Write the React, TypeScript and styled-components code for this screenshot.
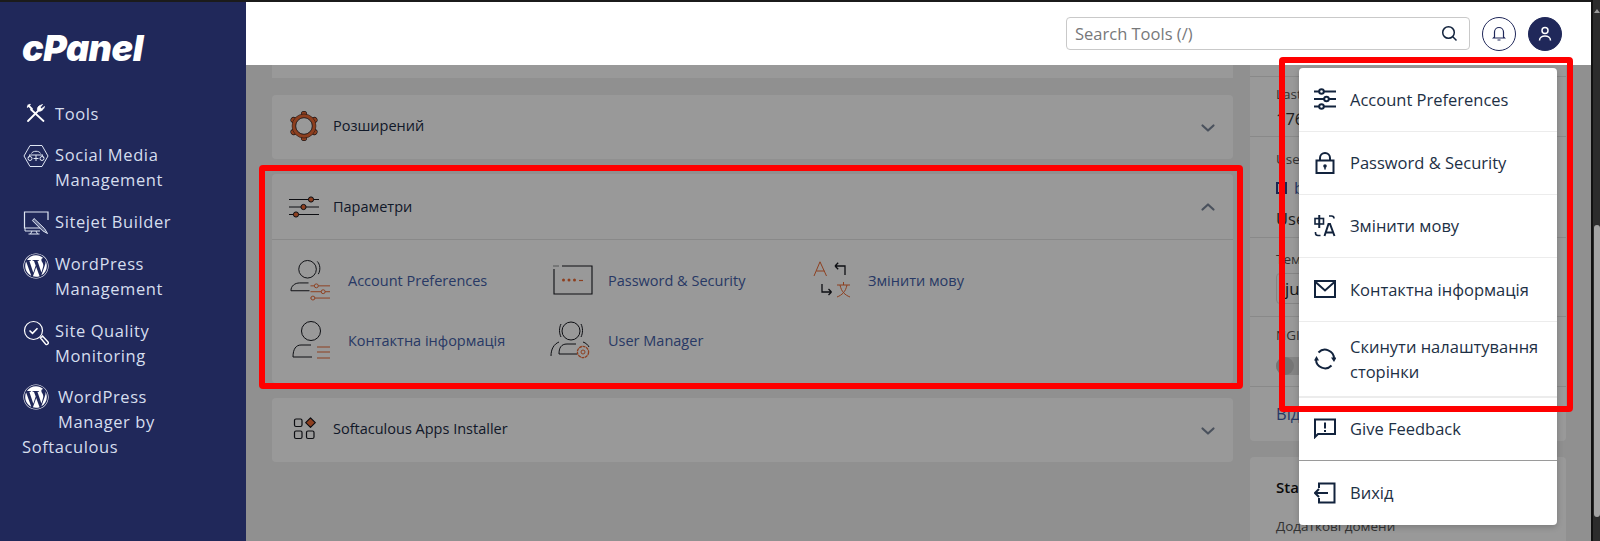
import React from 'react';
import styled, { createGlobalStyle } from 'styled-components';
import { FaWordpress } from 'react-icons/fa';

const GlobalStyle = createGlobalStyle`
  html, body {
    margin: 0;
    padding: 0;
    height: 541px;
    overflow: hidden;
    background: #2c2c2c;
    font-family: "Open Sans", "Noto Sans", sans-serif;
  }
  * { box-sizing: border-box; }
`;

const ORANGE = '#ec6a35';
const INK = '#16181f';

const ChevronIcon = ({ up }: { up?: boolean }) => (
  <ChevronWrap $up={up}>
    <svg width="18" height="18" viewBox="0 0 18 18" fill="none" stroke="#7c889b" strokeWidth="2.2" strokeLinecap="round" strokeLinejoin="round">
      <path d={up ? 'M3.5 11.5 9 6.5l5.500 5' : 'M3.5 6.5 9 11.5l5.500-5'} />
    </svg>
  </ChevronWrap>
);

const GearIcon = () => (
  <svg width="30" height="30" viewBox="0 0 30 30">
    <g stroke={INK} strokeWidth="6.200" strokeLinecap="round">
      <path d="M15 3v24M4.600 9l20.800 12M4.600 21l20.800-12" />
    </g>
    <g stroke={ORANGE} strokeWidth="5" strokeLinecap="round">
      <path d="M15 3v24M4.600 9l20.800 12M4.600 21l20.800-12" />
    </g>
    <circle cx="15" cy="15" r="12" fill={ORANGE} stroke={INK} strokeWidth="0.500" />
    <circle cx="15" cy="15" r="8.300" fill="#fff" stroke={INK} strokeWidth="0.800" />
  </svg>
);

const SlidersBigIcon = () => (
  <svg width="30" height="22" viewBox="0 0 30 22" fill="none" stroke={INK} strokeWidth="1">
    <path d="M0 3.500h30M0 11h30M0 18.500h30" />
    <circle cx="22" cy="3.500" r="2.600" fill={ORANGE} />
    <circle cx="14.500" cy="11" r="2.600" fill={ORANGE} />
    <circle cx="7" cy="18.500" r="2.600" fill={ORANGE} />
  </svg>
);

const AppsIcon = () => (
  <svg width="24" height="24" viewBox="0 0 24 24" fill="none" stroke={INK} strokeWidth="1.200">
    <rect x="1.500" y="2" width="7.500" height="7.500" rx="1.500" />
    <rect x="1.500" y="14" width="7.500" height="7.500" rx="1.500" />
    <rect x="13.500" y="14" width="7.500" height="7.500" rx="1.500" />
    <path d="M17.500.8l4.800 4.800-4.800 4.800-4.800-4.800z" fill={ORANGE} strokeLinejoin="round" />
  </svg>
);

const AccountPrefsIcon = () => (
  <svg width="42" height="42" viewBox="0 0 42 42" fill="none" strokeWidth="1">
    <g stroke={INK}>
      <circle cx="19" cy="10" r="9" />
      <path d="M29 2c3 3 3.500 9 1 13M20 24H11c-5 0-9 3-9 8h19" />
    </g>
    <g stroke={ORANGE}>
      <path d="M22 27h20M22 33h20M22 39.500h20" />
      <circle cx="28" cy="27" r="2" fill="#fff" />
      <circle cx="35" cy="33" r="2" fill="#fff" />
      <circle cx="24.500" cy="39.500" r="2" fill="#fff" />
    </g>
  </svg>
);

const PasswordIcon = () => (
  <svg width="40" height="30" viewBox="0 0 40 30" fill="none">
    <path d="M9 1h30v28H1V4" stroke={INK} strokeWidth="1.100" />
    <path d="M0.500 1h6" stroke={INK} strokeWidth="1" strokeDasharray="1 1" />
    <g fill={ORANGE}>
      <circle cx="10.500" cy="15" r="1.500" />
      <circle cx="16" cy="15" r="1.500" />
      <circle cx="21.500" cy="15" r="1.500" />
    </g>
    <path d="M26 15.500h4" stroke={ORANGE} strokeWidth="1.200" />
  </svg>
);

const LanguageIcon = () => (
  <svg width="38" height="38" viewBox="0 0 38 38" fill="none" strokeWidth="1">
    <path d="M1 15 7 0.800 13.500 15M3.400 10h8" stroke={ORANGE} />
    <path d="M22 5l3.200-3.200M22 5l3.200 3.200M22 5h10v9" stroke={INK} strokeWidth="1.300" />
    <path d="M9 23v8h9.500M18.500 31l-3-3M18.500 31l-3 3" stroke={INK} strokeWidth="1.300" />
    <path d="M24 24h13M30.500 21v3M27 24c1.500 7 5 10 10 12M34 24c-1.500 7-5 10-10 12" stroke={ORANGE} />
  </svg>
);

const ContactIcon = () => (
  <svg width="38" height="38" viewBox="0 0 38 38" fill="none" strokeWidth="1">
    <g stroke={INK}>
      <circle cx="19" cy="10" r="9.500" />
      <path d="M19 24H9c-5 0-8 4-8 12h19" />
    </g>
    <path d="M25 26h13M25 31h13M25 37h13" stroke={ORANGE} />
  </svg>
);

const UserManagerIcon = () => (
  <svg width="42" height="38" viewBox="0 0 42 38" fill="none" strokeWidth="1">
    <g stroke={INK}>
      <circle cx="21" cy="10" r="9" />
      <path d="M11 3c-2 4-2 9 0 13M31 3c2 4 2 9 0 13M9 21c-5 2-8 7-8 14M33 21c3 1 5 3 6 5M27 33H9c0-6 2-10 8-10h9" />
    </g>
    <circle cx="33" cy="31" r="5.600" stroke={ORANGE} strokeDasharray="3 0.600" strokeWidth="1.300" />
    <circle cx="33" cy="31" r="2" stroke={ORANGE} />
  </svg>
);

const NavToolsIcon = () => (
  <svg width="20" height="20" viewBox="0 0 20 20" fill="none" stroke="#fff" strokeWidth="1.800" strokeLinecap="round">
    <path d="M2 18 11.500 8.500" />
    <path d="M11.800 8.200c-1-2.200-.2-4 1.200-5.200l3.500-1.500-2.300 2.800 1.400 1.400 2.900-2.200c-.6 2.800-3.200 5.400-6.700 4.700z" fill="#fff" strokeWidth="0.800" strokeLinejoin="round" />
    <path d="M2.300 2.300 6 6M5 6.500 17.500 18" />
    <path d="M1.500 4 4 1.500" strokeWidth="1.400" />
  </svg>
);

const NavSocialIcon = () => (
  <svg width="26" height="24" viewBox="0 0 26 24" fill="none" stroke="#dfe6f3" strokeWidth="1">
    <path d="M7 1.500h12L25 12l-6 10.500H7L1 12z" />
    <path d="M8.500 9.500c1-3 8-3 9 0M6 11h14M7 11l-2 3M19 11l2 3" />
    <circle cx="7" cy="14.500" r="2" />
    <circle cx="19" cy="14.500" r="2" />
    <path d="M13 11v6M10.500 14.500h5" />
  </svg>
);

const NavSitejetIcon = () => (
  <svg width="26" height="24" viewBox="0 0 26 24" fill="none" stroke="#dfe6f3" strokeWidth="1">
    <path d="M17 17H1.500V1h23.500v8" strokeWidth="1.200" />
    <path d="M2 17v3h15M9 20l-1.500 3M13 20l1.500 3M5.500 23h11" />
    <path d="M11 7.500l10.500 10 3 5-5-2.800-10-10z" fill="#dfe6f3" fillOpacity="0.35" />
  </svg>
);

const NavQualityIcon = () => (
  <svg width="26" height="26" viewBox="0 0 26 26" fill="none" stroke="#fff">
    <circle cx="10.500" cy="10.500" r="9" strokeWidth="1.200" />
    <path d="M6.500 10.500l3 2.800 5-5" strokeWidth="1.600" />
    <path d="M17.500 18l2-2 5.500 6c1 1.500-1 3.300-2.300 2.300z" strokeWidth="1.400" />
  </svg>
);

const menuStroke = { fill: 'none', stroke: '#12233d', strokeWidth: 2 };

const MenuSlidersIcon = () => (
  <svg width="22" height="22" viewBox="0 0 22 22" {...menuStroke}>
    <path d="M0 3.500h5M10 3.500h12M0 11h10M15 11h7M0 18.500h5M10 18.500h12" />
    <circle cx="7.500" cy="3.500" r="2.300" />
    <circle cx="12.500" cy="11" r="2.300" />
    <circle cx="7.500" cy="18.500" r="2.300" />
  </svg>
);

const MenuLockIcon = () => (
  <svg width="22" height="22" viewBox="0 0 22 22" {...menuStroke}>
    <rect x="2.500" y="8.500" width="17" height="12.500" />
    <path d="M6 8.500V6a5 5 0 0 1 10 0v2.500" />
    <circle cx="11" cy="14" r="1.800" fill="#12233d" stroke="none" />
    <path d="M11 14v3.500" strokeWidth="1.500" />
  </svg>
);

const MenuTranslateIcon = () => (
  <svg width="22" height="22" viewBox="0 0 22 22" {...menuStroke}>
    <rect x="1" y="3.500" width="8.500" height="5.500" strokeWidth="1.600" />
    <path d="M5.250 0v13" />
    <path d="M15 1h2.500c1.500 0 2.500 1 2.500 2.500M6.500 20.500H4C2.500 20.500 1.500 19.500 1.500 18v-1" strokeWidth="1.600" />
    <path d="M10.500 21l4-12h1.500l4.500 12M12 17.500h7" strokeWidth="2" />
  </svg>
);

const MenuMailIcon = () => (
  <svg width="22" height="18" viewBox="0 0 22 18" {...menuStroke}>
    <rect x="1" y="1" width="20" height="16" />
    <path d="M1.500 2 11 10.500 20.500 2" />
  </svg>
);

const MenuResetIcon = () => (
  <svg width="22" height="22" viewBox="0 0 22 22" {...menuStroke}>
    <path d="M4.500 4.500A9 9 0 0 1 20 10.500M17.500 17.500A9 9 0 0 1 2 11.500" />
    <path d="M17 9.500h5.500L20 14zM0 12.500h5L2.500 8z" fill="#12233d" stroke="none" />
  </svg>
);

const MenuFeedbackIcon = () => (
  <svg width="22" height="21" viewBox="0 0 22 21" {...menuStroke}>
    <path d="M1 19V1.500h20V16H4z" />
    <path d="M11 4.500v6M11 12v2" />
  </svg>
);

const MenuExitIcon = () => (
  <svg width="22" height="22" viewBox="0 0 22 22" {...menuStroke}>
    <path d="M5 6V1.500h15.500v19H5V16" />
    <path d="M14 11H1M5 7l-4 4 4 4" />
  </svg>
);

const App = () => {
  return (
    <Page>
      <GlobalStyle />
      <Shell>
        <TopBand />
        <Body>
          <Sidebar>
            <Logo>cPanel</Logo>
            <Nav>
              <NavItem>
                <NavIcon><NavToolsIcon /></NavIcon>
                Tools
              </NavItem>
              <NavItem>
                <NavIcon><NavSocialIcon /></NavIcon>
                <span>Social Media<br />Management</span>
              </NavItem>
              <NavItem>
                <NavIcon><NavSitejetIcon /></NavIcon>
                Sitejet Builder
              </NavItem>
              <NavItem>
                <NavIcon><FaWordpress size={26} color="#fff" /></NavIcon>
                <span>WordPress<br />Management</span>
              </NavItem>
              <NavItem>
                <NavIcon><NavQualityIcon /></NavIcon>
                <span>Site Quality<br />Monitoring</span>
              </NavItem>
              <WrappedNavItem>
                <FloatIcon><FaWordpress size={26} color="#fff" /></FloatIcon>
                WordPress Manager by Softaculous
              </WrappedNavItem>
            </Nav>
          </Sidebar>
          <Main>
            <Header>
              <SearchBox>
                <SearchInput placeholder="Search Tools (/)" />
                <svg width="17" height="17" viewBox="0 0 17 17" fill="none" stroke="#12233d" strokeWidth="1.500">
                  <circle cx="7.500" cy="7.500" r="5.800" />
                  <path d="M11.800 11.800 15.500 15.500" />
                </svg>
              </SearchBox>
              <BellButton>
                <svg width="14" height="15" viewBox="0 0 14 15" fill="none" stroke="#20285a" strokeWidth="1.200">
                  <path d="M2.500 11V6a4.500 4.500 0 0 1 9 0v5l1 1H1.500zM5.500 14h3" />
                </svg>
              </BellButton>
              <AvatarButton>
                <svg width="14" height="16" viewBox="0 0 14 16" fill="none" stroke="#fff" strokeWidth="1.500">
                  <circle cx="7" cy="4.500" r="3" />
                  <path d="M1.500 14.500c0-6 11-6 11 0" />
                </svg>
              </AvatarButton>
            </Header>
            <Content>
              <LeftColumn>
                <StubCard />
                <Card>
                  <CardHeader>
                    <CardIcon><GearIcon /></CardIcon>
                    <CardTitle>Розширений</CardTitle>
                    <ChevronIcon />
                  </CardHeader>
                </Card>
                <Card>
                  <CardHeader $open>
                    <CardIcon><SlidersBigIcon /></CardIcon>
                    <CardTitle>Параметри</CardTitle>
                    <ChevronIcon up />
                  </CardHeader>
                  <ToolGrid>
                    <ToolLink>
                      <ToolIcon><AccountPrefsIcon /></ToolIcon>
                      Account Preferences
                    </ToolLink>
                    <ToolLink>
                      <ToolIcon $gap={15}><PasswordIcon /></ToolIcon>
                      Password &amp; Security
                    </ToolLink>
                    <ToolLink>
                      <ToolIcon $gap={17}><LanguageIcon /></ToolIcon>
                      Змінити мову
                    </ToolLink>
                    <ToolLink>
                      <ToolIcon><ContactIcon /></ToolIcon>
                      Контактна інформація
                    </ToolLink>
                    <ToolLink>
                      <ToolIcon $gap={16}><UserManagerIcon /></ToolIcon>
                      User Manager
                    </ToolLink>
                  </ToolGrid>
                </Card>
                <Card>
                  <CardHeader>
                    <CardIcon $inset={4}><AppsIcon /></CardIcon>
                    <CardTitle>Softaculous Apps Installer</CardTitle>
                    <ChevronIcon />
                  </CardHeader>
                </Card>
              </LeftColumn>
              <RightColumn>
                <InfoCard>
                  <InfoRow $height={12} $top={0} />
                  <InfoRow $height={60} $top={8} $gap={4}>
                    <InfoLabel>Last Login IP</InfoLabel>
                    <InfoValue>176</InfoValue>
                  </InfoRow>
                  <InfoRow $height={101} $top={13}>
                    <InfoLabel>User</InfoLabel>
                    <InfoLink>
                      <svg width="11" height="12" viewBox="0 0 11 12" fill="none" stroke="#2e4288" strokeWidth="2">
                        <rect x="1" y="1" width="9" height="10" />
                      </svg>
                      b
                    </InfoLink>
                    <InfoValue>Use</InfoValue>
                  </InfoRow>
                  <InfoRow $height={79} $top={12} $gap={5}>
                    <InfoLabel>Тема</InfoLabel>
                    <ThemeSelect>jupiter</ThemeSelect>
                  </InfoRow>
                  <InfoRow $height={70} $top={9}>
                    <InfoLabel>NGINX</InfoLabel>
                    <Toggle />
                  </InfoRow>
                  <InfoRow $height={54} $top={15}>
                    <InfoLink>Відомості</InfoLink>
                  </InfoRow>
                </InfoCard>
                <StatsCard>
                  <StatsTitle>Statistics</StatsTitle>
                  <InfoLabel>Додаткові домени</InfoLabel>
                </StatsCard>
              </RightColumn>
              <Backdrop />
            </Content>
          </Main>
        </Body>
      </Shell>
      <Scrollbar>
        <ScrollArrow />
        <ScrollThumb />
      </Scrollbar>
      <UserMenu>
        <MenuItem $height={64}>
          <MenuIcon><MenuSlidersIcon /></MenuIcon>
          Account Preferences
        </MenuItem>
        <MenuItem $height={63}>
          <MenuIcon><MenuLockIcon /></MenuIcon>
          Password &amp; Security
        </MenuItem>
        <MenuItem $height={63}>
          <MenuIcon><MenuTranslateIcon /></MenuIcon>
          Змінити мову
        </MenuItem>
        <MenuItem $height={64}>
          <MenuIcon><MenuMailIcon /></MenuIcon>
          Контактна інформація
        </MenuItem>
        <MenuItem $height={76} $rule="2px solid #ececec">
          <MenuIcon><MenuResetIcon /></MenuIcon>
          Скинути налаштування сторінки
        </MenuItem>
        <MenuItem $height={63} $rule="1px solid #9a9a9a">
          <MenuIcon><MenuFeedbackIcon /></MenuIcon>
          Give Feedback
        </MenuItem>
        <MenuItem $height={64} $rule="0">
          <MenuIcon><MenuExitIcon /></MenuIcon>
          Вихід
        </MenuItem>
      </UserMenu>
      <LeftHighlight />
      <RightHighlight />
    </Page>
  );
};

export default App;

const Page = styled.div`
  position: relative;
  display: flex;
  width: 1600px;
  height: 541px;
  overflow: hidden;
`;

const Shell = styled.div`
  flex: 1;
  min-width: 0;
  display: flex;
  flex-direction: column;
`;

const TopBand = styled.div`
  height: 2px;
  background: #1b1b1b;
`;

const Body = styled.div`
  flex: 1;
  min-height: 0;
  display: flex;
`;

const Sidebar = styled.aside`
  width: 246px;
  flex-shrink: 0;
  background: #20285a;
  padding: 0 22px;
`;

const Logo = styled.div`
  height: 98.500px;
  padding-top: 25px;
  color: #fff;
  font-family: Inter, "Open Sans", sans-serif;
  font-style: italic;
  font-weight: 900;
  font-size: 36px;
  line-height: 42px;
  letter-spacing: -0.5px;
`;

const Nav = styled.nav`
  display: flex;
  flex-direction: column;
  gap: 16.500px;
  color: #d6deee;
  font-size: 16.500px;
  line-height: 25px;
  letter-spacing: 0.6px;
`;

const NavItem = styled.a`
  display: flex;
  align-items: flex-start;
`;

const NavIcon = styled.span`
  width: 33px;
  flex-shrink: 0;
  display: flex;
  justify-content: center;
  padding-right: 6px;
  padding-top: 2px;
`;

const WrappedNavItem = styled.a`
  display: block;
  width: 150px;
`;

const FloatIcon = styled.span`
  float: left;
  display: flex;
  height: 50px;
  padding: 0 9px 0 1px;
`;

const Main = styled.main`
  flex: 1;
  min-width: 0;
  display: flex;
  flex-direction: column;
`;

const Header = styled.header`
  height: 63px;
  flex-shrink: 0;
  display: flex;
  align-items: center;
  justify-content: flex-end;
  gap: 11.500px;
  padding-right: 29px;
  background: #fff;
`;

const SearchBox = styled.div`
  width: 404px;
  height: 33px;
  display: flex;
  align-items: center;
  padding: 0 11px 0 8px;
  border: 1px solid #c9c9c9;
  border-radius: 4px;
`;

const SearchInput = styled.input`
  flex: 1;
  min-width: 0;
  border: 0;
  outline: 0;
  padding: 0;
  font-family: inherit;
  font-size: 16.500px;
  &::placeholder {
    color: #77787a;
    opacity: 1;
  }
`;

const BellButton = styled.div`
  width: 34px;
  height: 34px;
  display: flex;
  align-items: center;
  justify-content: center;
  border: 1px solid #20285a;
  border-radius: 50%;
`;

const AvatarButton = styled(BellButton)`
  margin-left: 1px;
  background: #20285a;
`;

const Content = styled.div`
  position: relative;
  flex: 1;
  min-height: 0;
  overflow: hidden;
  display: grid;
  grid-template-columns: 961px 316px;
  column-gap: 17px;
  padding-left: 26px;
  background: #f0f0f0;
`;

const Backdrop = styled.div`
  position: absolute;
  inset: 0;
  background: rgba(0, 0, 0, 0.4);
`;

const LeftColumn = styled.div`
  display: flex;
  flex-direction: column;
  gap: 15px;
`;

const StubCard = styled.div`
  height: 13px;
  margin-bottom: 2px;
  background: #fff;
`;

const Card = styled.section`
  background: #fff;
  border-radius: 4px;
`;

const CardHeader = styled.div<{ $open?: boolean }>`
  height: ${(p) => (p.$open ? 66 : 64)}px;
  display: flex;
  align-items: center;
  padding: 0 16px ${(p) => (p.$open ? 0 : 3)}px 17px;
  border-bottom: ${(p) => (p.$open ? '1px solid #e4e4e4' : '0')};
`;

const ChevronWrap = styled.span<{ $up?: boolean }>`
  display: flex;
  margin-top: ${(p) => (p.$up ? 0 : 4)}px;
`;

const CardIcon = styled.span<{ $inset?: number }>`
  width: 44px;
  flex-shrink: 0;
  display: flex;
  align-items: center;
  padding-left: ${(p) => p.$inset ?? 0}px;
`;

const CardTitle = styled.h3`
  flex: 1;
  margin: 0;
  color: #1b2b45;
  font-size: 14.500px;
  font-weight: 400;
`;

const ToolGrid = styled.div`
  display: grid;
  grid-template-columns: repeat(3, 260px);
  grid-auto-rows: 60px;
  padding: 10px 17px 0;
  height: 143px;
`;

const ToolLink = styled.a`
  display: flex;
  align-items: center;
  color: #4460a8;
  font-size: 14.500px;
`;

const ToolIcon = styled.span<{ $gap?: number }>`
  width: 59px;
  flex-shrink: 0;
  display: flex;
  justify-content: flex-end;
  padding-right: ${(p) => p.$gap ?? 18}px;
`;

const RightColumn = styled.div`
  display: flex;
  flex-direction: column;
  gap: 16px;
`;

const InfoCard = styled.section`
  background: #fff;
  border-radius: 0 0 4px 4px;
  padding: 0 26px;
  width: 316px;
`;

const InfoRow = styled.div<{ $height: number; $top: number; $gap?: number }>`
  height: ${(p) => p.$height}px;
  margin: 0 -26px;
  padding: ${(p) => p.$top}px 26px 0;
  border-bottom: 1px solid #e4e4e4;
  display: flex;
  flex-direction: column;
  gap: ${(p) => p.$gap ?? 8}px;
  &:last-child {
    border-bottom: 0;
  }
`;

const InfoLabel = styled.div`
  color: #555;
  font-size: 13.500px;
`;

const InfoValue = styled.div`
  color: #333;
  font-size: 16.500px;
`;

const InfoLink = styled.a`
  display: flex;
  align-items: center;
  gap: 7px;
  color: #4460a8;
  font-size: 16.500px;
`;

const ThemeSelect = styled.div`
  padding: 3px 8px;
  border: 1px solid #ddd;
  border-radius: 4px;
  color: #222;
  font-size: 16.500px;
`;

const Toggle = styled.div`
  position: relative;
  width: 34px;
  height: 18px;
  margin-top: 5px;
  border-radius: 9px;
  background: #dcdcdc;
  &::before {
    content: '';
    position: absolute;
    top: 0;
    left: 0;
    width: 18px;
    height: 18px;
    border-radius: 50%;
    background: #c4c4c4;
  }
`;

const StatsCard = styled.section`
  background: #fff;
  border-radius: 4px;
  padding: 20px 26px;
  height: 120px;
`;

const StatsTitle = styled.h4`
  margin: 0 0 20px;
  color: #111;
  font-size: 15px;
  font-weight: 600;
`;

const Scrollbar = styled.div`
  width: 9px;
  flex-shrink: 0;
  padding: 9px 0 0 1px;
  background: #2c2c2c;
  border-left: 2px solid #111;
`;

const ScrollArrow = styled.div`
  width: 0;
  height: 0;
  border-left: 3px solid transparent;
  border-right: 3px solid transparent;
  border-bottom: 4px solid #9a9a9a;
`;

const ScrollThumb = styled.div`
  width: 6px;
  height: 292px;
  margin-top: 212px;
  border-radius: 3px;
  background: #a3a3a3;
`;

const UserMenu = styled.div`
  position: absolute;
  top: 68px;
  left: 1299px;
  width: 258px;
  background: #fff;
  border-radius: 4px;
  box-shadow: 0 2px 6px rgba(0, 0, 0, 0.2);
`;

const MenuItem = styled.a<{ $height: number; $rule?: string }>`
  height: ${(p) => p.$height}px;
  display: flex;
  align-items: center;
  padding: 0 14px 1px 0;
  color: #1d3045;
  font-size: 16.500px;
  line-height: 25px;
  border-bottom: ${(p) => p.$rule ?? '1px solid #ececec'};
`;

const MenuIcon = styled.span`
  width: 51px;
  flex-shrink: 0;
  display: flex;
  justify-content: flex-start;
  padding-left: 15px;
`;

const Highlight = styled.div`
  position: absolute;
  border: 6px solid #f00;
  border-radius: 4px;
  pointer-events: none;
`;

const LeftHighlight = styled(Highlight)`
  top: 165px;
  left: 259px;
  width: 984px;
  height: 224px;
`;

const RightHighlight = styled(Highlight)`
  top: 57px;
  left: 1279px;
  width: 294px;
  height: 355px;
`;
